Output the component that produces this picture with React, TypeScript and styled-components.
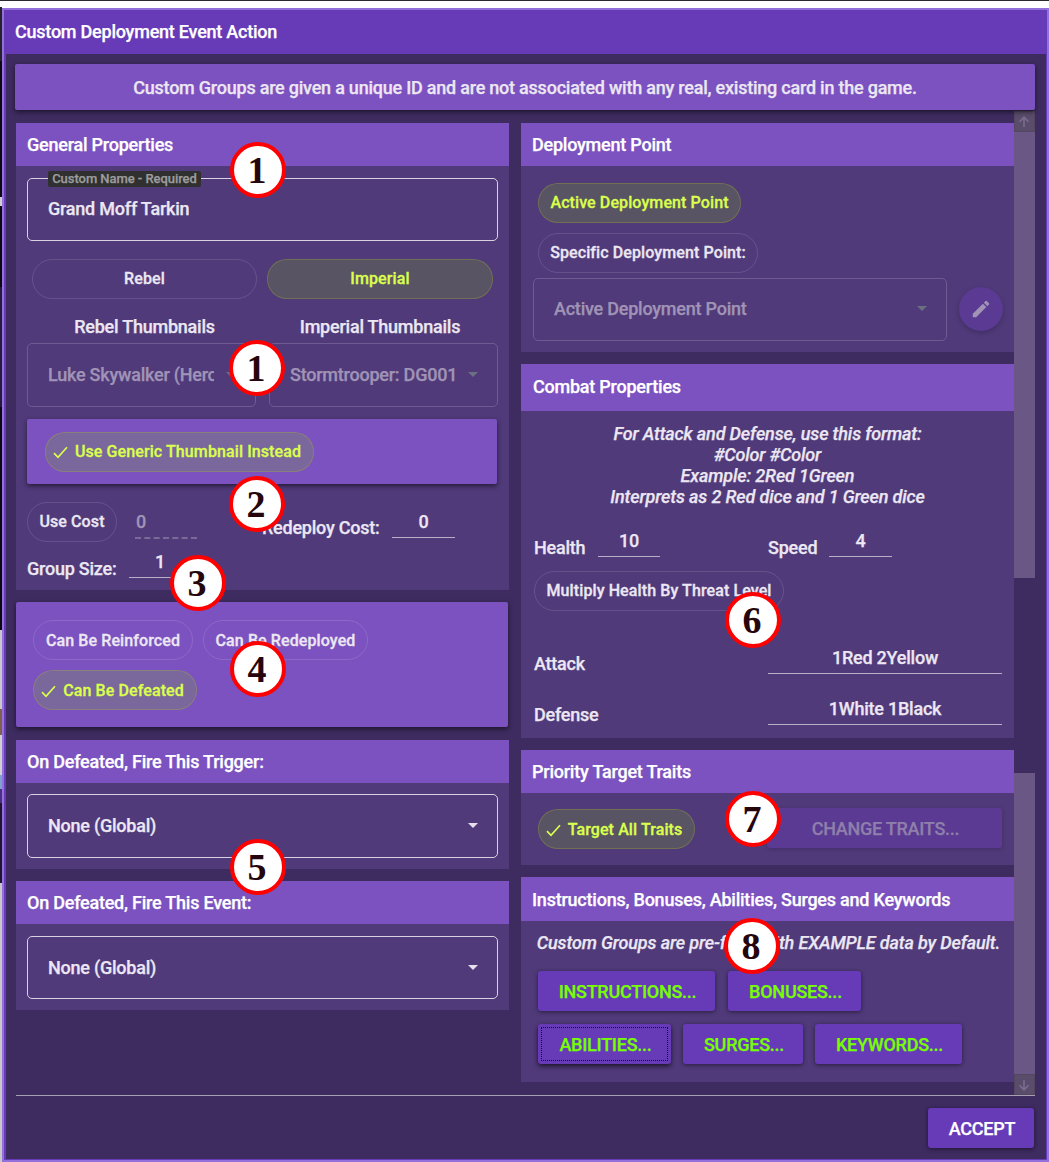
import React from "react";
import styled, { createGlobalStyle, css } from "styled-components";

const Global = createGlobalStyle`
  *, *::before, *::after { box-sizing: border-box; }
  body { margin: 0; background: #fff; }
`;

const Page = styled.div`
  position: relative;
  display: flex;
  flex-direction: column;
  width: 1049px;
  height: 1162px;
  overflow: hidden;
  border-top: 1px solid #2b2830;
  padding-top: 7px;
  background: #fff;
  font: 500 18px/21px Roboto, "Liberation Sans", sans-serif;
  letter-spacing: -0.23px;
  -webkit-text-stroke: 0.25px currentColor;
  color: #ece7f2;
`;

const Columns = styled.div`
  flex: 1;
  display: flex;
  min-height: 0;
`;

const Backdrop = styled.div`
  width: 2px;
  margin-top: -1px;
  background: linear-gradient(
    #25222b 0 54px, #0b0a0e 54px 190px, #d0d0d0 190px 199px, #0b0a0e 199px 280px,
    #241a3b 280px 400px, #0b0a0e 400px 623px, #c9c9c9 623px 702px, #80604c 702px 728px,
    #d0d0d0 728px 768px, #7aa3cf 768px 782px, #4a2f82 782px 796px, #1e1631 796px 876px, #c8c8c8 876px
  );
`;

const Dialog = styled.div`
  flex: 1;
  display: flex;
  flex-direction: column;
  border: 2px solid #9370db;
  background: #673ab7;
`;

const TitleBar = styled.header`
  height: 44px;
  padding: 0 11px 1px;
  display: flex;
  align-items: center;
  color: #fff;
`;

const Body = styled.main`
  flex: 1;
  display: flex;
  flex-direction: column;
  margin: 0 1px 1px 2px;
  padding: 10px 11px 0 9px;
  background: #3e2b60;
`;

const raised = css`
  border-radius: 2px;
  background: #7b52bf;
  box-shadow: 0 2px 5px rgba(0, 0, 0, 0.55);
`;

const Notice = styled.div`
  ${raised}
  position: relative;
  height: 46px;
  display: flex;
  align-items: center;
  justify-content: center;
`;

const Scroller = styled.div`
  display: flex;
  height: 986px;
  margin-left: 1px;
  border-bottom: 1px solid #a79fb3;
  padding-top: 1px;
`;

const Content = styled.div`
  display: flex;
  gap: 12px;
  padding-top: 12px;
`;

const Column = styled.div`
  width: 493px;
  display: flex;
  flex-direction: column;
  gap: 12px;
`;

const Card = styled.section<{ $h: number; $mt?: number }>`
  height: ${(p) => p.$h}px;
  margin-top: ${(p) => p.$mt ?? 0}px;
  background: #503a7a;
`;

const CardHead = styled.h2<{ $h?: number; $pad?: string }>`
  margin: 0;
  height: ${(p) => p.$h ?? 43}px;
  padding: ${(p) => p.$pad ?? "0 11px"};
  display: flex;
  align-items: center;
  background: #7b52bf;
  color: #fff;
  font: inherit;
`;

const CardBody = styled.div<{ $pad?: string }>`
  padding: ${(p) => p.$pad ?? "11px"};
  display: flex;
  flex-direction: column;
`;

const Row = styled.div<{ $gap?: number; $mt?: number; $ml?: number; $align?: string; $h?: number }>`
  display: flex;
  gap: ${(p) => p.$gap ?? 0}px;
  margin-top: ${(p) => p.$mt ?? 0}px;
  margin-left: ${(p) => p.$ml ?? 0}px;
  align-items: ${(p) => p.$align ?? "center"};
  ${(p) => p.$h && `height: ${p.$h}px;`}
`;

const Field = styled.div<{ $w: number; $h: number; $dim?: boolean; $pb?: number }>`
  position: relative;
  width: ${(p) => p.$w}px;
  height: ${(p) => p.$h}px;
  flex: none;
  display: flex;
  align-items: center;
  padding: 0 20px ${(p) => p.$pb ?? 2}px;
  border: 1px solid ${(p) => (p.$dim ? "#6f5b92" : "#d9d2e2")};
  border-radius: 5px;
  color: ${(p) => (p.$dim ? "#a094b6" : "#ece7f2")};
`;

const FieldLabel = styled.span`
  position: absolute;
  left: 20px;
  top: -8px;
  width: 153px;
  height: 16px;
  border-radius: 2px;
  background: #303030;
  color: #9c9c9c;
  font-size: 13px;
  line-height: 16px;
  text-align: center;
  letter-spacing: -0.05px;
`;

const FieldValue = styled.span<{ $w?: number }>`
  ${(p) => p.$w && `width: ${p.$w}px;`}
  overflow: hidden;
  white-space: nowrap;
`;

const Caret = styled.span<{ $dim?: boolean }>`
  margin-left: auto;
  margin-right: -1px;
  border: 5px solid transparent;
  border-top-color: ${(p) => (p.$dim ? "#6a7080" : "#e6e0ee")};
  border-bottom: 0;
`;

const Chip = styled.button<{ $w: number; $on?: boolean; $check?: boolean; $low?: boolean }>`
  width: ${(p) => p.$w}px;
  height: 40px;
  flex: none;
  padding: ${(p) => (p.$low ? 2 : 0)}px ${(p) => (p.$check ? 5 : 0)}px 0 0;
  display: flex;
  align-items: center;
  justify-content: center;
  gap: 7px;
  border-radius: 20px;
  border: 1px solid ${(p) => (p.$on ? "rgba(158, 190, 30, 0.42)" : "rgba(255, 255, 255, 0.12)")};
  background: ${(p) => (p.$on ? "rgba(121, 195, 0, 0.19)" : "transparent")};
  background-clip: padding-box;
  color: ${(p) => (p.$on ? "#dbff4d" : "#ece7f2")};
  font: 500 16px/20px Roboto, sans-serif;
  letter-spacing: 0.1px;
  -webkit-text-stroke: 0.3px currentColor;
  white-space: nowrap;
`;

const Caption = styled.div<{ $w: number }>`
  width: ${(p) => p.$w}px;
  text-align: center;
`;

const RaisedPanel = styled.div<{ $h: number; $pad: string; $w: number }>`
  ${raised}
  width: ${(p) => p.$w}px;
  height: ${(p) => p.$h}px;
  padding: ${(p) => p.$pad};
`;

const Label = styled.span<{ $w: number }>`
  width: ${(p) => p.$w}px;
  flex: none;
  white-space: nowrap;
`;

const Underlined = styled.span<{ $w: number; $wide?: boolean; $dim?: boolean }>`
  width: ${(p) => p.$w}px;
  height: ${(p) => (p.$wide ? 31 : 30)}px;
  flex: none;
  padding-top: ${(p) => (p.$wide ? 4 : p.$dim ? 2 : 3)}px;
  border-bottom: ${(p) => (p.$dim ? "2px dashed #7a6a98" : "1px solid #b9afc8")};
  padding-left: ${(p) => (p.$dim ? 1 : 0)}px;
  text-align: ${(p) => (p.$dim ? "left" : "center")};
  color: ${(p) => (p.$dim ? "#a094b6" : "#ece7f2")};
`;

const Help = styled.p<{ $h: number }>`
  margin: 0 0 0 -2px;
  height: ${(p) => p.$h}px;
  font-style: italic;
  letter-spacing: -0.15px;
  text-align: center;
  white-space: nowrap;
`;

const Button = styled.button<{ $w: number; $tone?: "lime" | "dim"; $focus?: boolean }>`
  width: ${(p) => p.$w}px;
  height: 40px;
  flex: none;
  padding: 0 0 0 2px;
  border: 0;
  border-radius: 3px;
  background: ${(p) => (p.$tone === "dim" ? "#5a3a92" : "#673ab7")};
  box-shadow: 0 1px 4px rgba(0, 0, 0, ${(p) => (p.$tone === "dim" ? 0.18 : 0.5)});
  color: ${(p) => (p.$tone === "dim" ? "#8f7fab" : p.$tone === "lime" ? "#76ff03" : "#fff")};
  font: 500 18px/21px Roboto, sans-serif;
  letter-spacing: -0.25px;
  -webkit-text-stroke: 0.25px currentColor;
  ${(p) => p.$focus && "outline: 1px dotted #0d0818; outline-offset: -4px; box-shadow: 0 2px 5px rgba(0,0,0,.7);"}
`;

const RoundButton = styled.button`
  width: 44px;
  height: 44px;
  flex: none;
  margin: -2px 0 0 12px;
  padding: 0;
  border: 0;
  border-radius: 50%;
  background: #5a3a92;
  box-shadow: 0 2px 5px rgba(0, 0, 0, 0.2);
  display: grid;
  place-items: center;
`;

const Scrollbar = styled.div`
  width: 21px;
  display: flex;
  flex-direction: column;
`;

const ScrollArrow = styled.div`
  height: 21px;
  padding-right: 1px;
  border: 1px solid #52475f;
  background: #5a4d6c;
  display: grid;
  place-items: center;
`;

const Thumb = styled.div<{ $h: number; $mt?: number }>`
  height: ${(p) => p.$h}px;
  margin-top: ${(p) => p.$mt ?? 0}px;
  background: #6a5786;
`;

const Footer = styled.footer`
  display: flex;
  justify-content: flex-end;
  padding: 12px 1px 0 0;
`;

const Badge = styled.span<{ $x: number; $y: number }>`
  position: absolute;
  left: ${(p) => p.$x - 28}px;
  top: ${(p) => p.$y - 29}px;
  width: 56px;
  height: 56px;
  padding-right: 2px;
  border: 4px solid #f00;
  border-radius: 50%;
  background: #fff;
  color: #25060d;
  font: bold 38px/49px "Liberation Serif", serif;
  letter-spacing: 0;
  -webkit-text-stroke: 0;
  text-align: center;
`;

const badges: [string, number, number][] = [
  ["1", 258, 170],
  ["1", 257, 368],
  ["2", 257, 504],
  ["3", 198, 583],
  ["4", 258, 669],
  ["5", 258, 867],
  ["6", 753, 620],
  ["7", 753, 819],
  ["8", 752, 946],
];

const Check = () => (
  <svg width="15" height="13" viewBox="0 0 15 13" fill="none" stroke="#dbff4d" strokeWidth="1.7">
    <path d="M1 7.2 5 11.3 14 1.3" />
  </svg>
);

const Arrow = ({ down }: { down?: boolean }) => (
  <svg width="12" height="12" viewBox="0 0 12 12" fill="none" stroke="#7a6c8e" strokeWidth="1.6">
    <path d={down ? "M6 1V10.5M1.5 6.3 6 10.8 10.5 6.3" : "M6 11V1.5M1.5 5.7 6 1.2 10.5 5.7"} />
  </svg>
);

const Pencil = () => (
  <svg width="22" height="22" viewBox="0 0 24 24" fill="#a093b5">
    <path d="M3 17.25V21h3.75L17.81 9.94l-3.75-3.75L3 17.25zM20.71 7.04a1 1 0 0 0 0-1.41l-2.34-2.34a1 1 0 0 0-1.41 0l-1.83 1.83 3.75 3.75 1.83-1.83z" />
  </svg>
);

export default function App() {
  return (
    <Page>
      <Global />
      <Columns>
        <Backdrop />
        <Dialog>
          <TitleBar>Custom Deployment Event Action</TitleBar>
          <Body>
            <Notice>Custom Groups are given a unique ID and are not associated with any real, existing card in the game.</Notice>
            <Scroller>
              <Content>
                <Column>
                  <Card $h={467}>
                    <CardHead>General Properties</CardHead>
                    <CardBody $pad="12px 11px 0">
                      <Field $w={471} $h={63}>
                        <FieldLabel>Custom Name - Required</FieldLabel>
                        <FieldValue>Grand Moff Tarkin</FieldValue>
                      </Field>
                      <Row $gap={10} $mt={18} $ml={5}>
                        <Chip $w={225}>Rebel</Chip>
                        <Chip $w={226} $on>Imperial</Chip>
                      </Row>
                      <Row $mt={17} $h={21}>
                        <Caption $w={235}>Rebel Thumbnails</Caption>
                        <Caption $w={236}>Imperial Thumbnails</Caption>
                      </Row>
                      <Row $mt={6} $gap={13}>
                        <Field $w={229} $h={64} $dim>
                          <FieldValue $w={166}>Luke Skywalker (Hero)</FieldValue>
                          <Caret $dim />
                        </Field>
                        <Field $w={229} $h={64} $dim>
                          <FieldValue>Stormtrooper: DG001</FieldValue>
                          <Caret $dim />
                        </Field>
                      </Row>
                      <Row $mt={12} $h={65}>
                        <RaisedPanel $w={470} $h={65} $pad="13px 18px">
                          <Chip $w={269} $on $check><Check />Use Generic Thumbnail Instead</Chip>
                        </RaisedPanel>
                      </Row>
                      <Row $mt={18} $h={40} $align="flex-start">
                        <Chip $w={90}>Use Cost</Chip>
                        <Row $mt={7} $ml={18}><Underlined $w={62} $dim>0</Underlined></Row>
                        <Row $mt={15} $ml={65}><Label $w={130}>Redeploy Cost:</Label></Row>
                        <Row $mt={6}><Underlined $w={63}>0</Underlined></Row>
                      </Row>
                      <Row $mt={6} $h={31} $align="flex-start">
                        <Row $mt={10}><Label $w={102}>Group Size:</Label></Row>
                        <Underlined $w={62}>1</Underlined>
                      </Row>
                    </CardBody>
                  </Card>
                  <RaisedPanel $w={492} $h={125} $pad="18px 17px">
                    <Row $gap={10}>
                      <Chip $w={160} $low>Can Be Reinforced</Chip>
                      <Chip $w={165} $low>Can Be Redeployed</Chip>
                    </Row>
                    <Row $mt={10}>
                      <Chip $w={164} $on $check $low><Check />Can Be Defeated</Chip>
                    </Row>
                  </RaisedPanel>
                  <Card $h={129} $mt={1}>
                    <CardHead>On Defeated, Fire This Trigger:</CardHead>
                    <CardBody>
                      <Field $w={471} $h={64}><FieldValue>None (Global)</FieldValue><Caret /></Field>
                    </CardBody>
                  </Card>
                  <Card $h={129}>
                    <CardHead>On Defeated, Fire This Event:</CardHead>
                    <CardBody $pad="12px 11px">
                      <Field $w={471} $h={63} $pb={0}><FieldValue>None (Global)</FieldValue><Caret /></Field>
                    </CardBody>
                  </Card>
                </Column>
                <Column>
                  <Card $h={229}>
                    <CardHead>Deployment Point</CardHead>
                    <CardBody $pad="17px 11px 0 12px">
                      <Row $ml={5}><Chip $w={203} $on>Active Deployment Point</Chip></Row>
                      <Row $ml={5} $mt={10}><Chip $w={220}>Specific Deployment Point:</Chip></Row>
                      <Row $mt={5}>
                        <Field $w={414} $h={63} $dim><FieldValue>Active Deployment Point</FieldValue><Caret $dim /></Field>
                        <RoundButton><Pencil /></RoundButton>
                      </Row>
                    </CardBody>
                  </Card>
                  <Card $h={374}>
                    <CardHead $h={47} $pad="0 12px 2px">Combat Properties</CardHead>
                    <CardBody $pad="12px 11px 0 13px">
                      <Help $h={84}>
                        For Attack and Defense, use this format:<br />#Color #Color<br />Example: 2Red 1Green<br />Interprets as 2 Red dice and 1 Green dice
                      </Help>
                      <Row $mt={20} $h={31} $align="flex-start">
                        <Row $mt={10}><Label $w={64}>Health</Label></Row>
                        <Underlined $w={62}>10</Underlined>
                        <Row $mt={10} $ml={108}><Label $w={61}>Speed</Label></Row>
                        <Underlined $w={63}>4</Underlined>
                      </Row>
                      <Row $mt={13}><Chip $w={250}>Multiply Health By Threat Level</Chip></Row>
                      <Row $mt={32} $h={31} $align="flex-start">
                        <Row $mt={10}><Label $w={234}>Attack</Label></Row>
                        <Underlined $w={234} $wide>1Red 2Yellow</Underlined>
                      </Row>
                      <Row $mt={20} $h={31} $align="flex-start">
                        <Row $mt={10}><Label $w={234}>Defense</Label></Row>
                        <Underlined $w={234} $wide>1White 1Black</Underlined>
                      </Row>
                    </CardBody>
                  </Card>
                  <Card $h={115}>
                    <CardHead>Priority Target Traits</CardHead>
                    <CardBody $pad="15px 12px 0 17px">
                      <Row $gap={72} $align="flex-start">
                        <Row $mt={1}><Chip $w={157} $on $check $low><Check />Target All Traits</Chip></Row>
                        <Button $w={235} $tone="dim">CHANGE TRAITS...</Button>
                      </Row>
                    </CardBody>
                  </Card>
                  <Card $h={205}>
                    <CardHead $h={44}>Instructions, Bonuses, Abilities, Surges and Keywords</CardHead>
                    <CardBody $pad="11px 13px 0 17px">
                      <Help $h={21}>Custom Groups are pre-filled with EXAMPLE data by Default.</Help>
                      <Row $mt={18} $gap={13}>
                        <Button $w={177} $tone="lime">INSTRUCTIONS...</Button>
                        <Button $w={133} $tone="lime">BONUSES...</Button>
                      </Row>
                      <Row $mt={13} $gap={12}>
                        <Button $w={133} $tone="lime" $focus>ABILITIES...</Button>
                        <Button $w={120} $tone="lime">SURGES...</Button>
                        <Button $w={147} $tone="lime">KEYWORDS...</Button>
                      </Row>
                    </CardBody>
                  </Card>
                </Column>
              </Content>
              <Scrollbar>
                <ScrollArrow><Arrow /></ScrollArrow>
                <Thumb $h={446} />
                <Thumb $h={301} $mt={195} />
                <ScrollArrow><Arrow down /></ScrollArrow>
              </Scrollbar>
            </Scroller>
            <Footer><Button $w={106}>ACCEPT</Button></Footer>
          </Body>
        </Dialog>
      </Columns>
      {badges.map(([n, x, y], i) => (
        <Badge key={i} $x={x} $y={y}>{n}</Badge>
      ))}
    </Page>
  );
}
